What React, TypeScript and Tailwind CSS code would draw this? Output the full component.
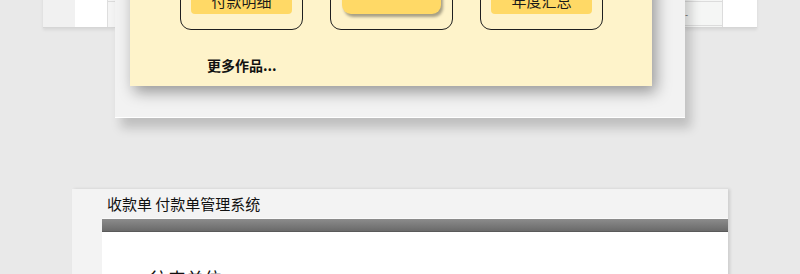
const cjk = { fontFamily: '"Noto Sans CJK SC", "Noto Sans", sans-serif' };

function SideSheet({ side }: { side: "left" | "right" }) {
	if (side === "left") {
		return (
			<div className="flex h-[88px] w-[72px] shrink-0 border-b border-[#d6d6d6] bg-white shadow-[0_2px_3px_rgba(0,0,0,0.08)]">
				<div className="w-[32px] bg-[#f1f1f1]" />
				<div className="w-[33px] border-r border-[#dedede] bg-white" />
				<div className="flex-1 bg-[#f4f4f4]">
					<div className="mt-[61px] border-t border-[#dcdcdc]" />
				</div>
			</div>
		);
	}
	return (
		<div className="flex h-[88px] w-[72px] shrink-0 border-b border-[#d6d6d6] bg-white shadow-[0_2px_3px_rgba(0,0,0,0.08)]">
			<div className="flex w-[38px] flex-col border-r border-[#dcdcdc] bg-[#f5f6f5]">
				<div className="mt-[61px] h-[25px] border-y border-[#dcdcdc] text-[9px] leading-[25px] text-[#555]">
					-
				</div>
			</div>
			<div className="flex-1 bg-white" />
		</div>
	);
}

function MenuBox({ label, raised }: { label?: string; raised?: boolean }) {
	return (
		<div className="flex h-[70px] w-[123px] flex-col justify-end rounded-[11px] border border-[#1f1f1f] px-[10px] pb-[15px]">
			{raised ? (
				<div className="mx-[1px] h-[48px] rounded-[9px] bg-[#ffd966] shadow-[2px_3px_3px_rgba(0,0,0,0.35)]" />
			) : (
				<div className="flex h-[28px] items-center justify-center rounded-[4px] bg-[#ffd966] pt-[1px] text-[15px] leading-[20px] text-[#1a1a1a]">
					{label}
				</div>
			)}
		</div>
	);
}

export default function App() {
	return (
		<div
			className="h-[274px] w-[800px] overflow-hidden bg-[#e9e9e9]"
			style={cjk}
		>
			<div className="-mt-[60px] flex items-start pl-[43px]">
				<SideSheet side="left" />
				<div className="relative z-10 h-[178px] w-[570px] shrink-0 border-b border-white bg-[#f2f2f2] pl-[15px] shadow-[6px_10px_10px_rgba(0,0,0,0.18)]">
					<div className="h-[146px] w-[522px] bg-[#fef3ca] pl-[50px] pt-[20px] shadow-[4px_6px_14px_rgba(0,0,0,0.38)]">
						<div className="flex gap-[27px]">
							<MenuBox label="付款明细" />
							<MenuBox raised />
							<MenuBox label="年度汇总" />
						</div>
						<div className="mt-[25px] pl-[27px] text-[14px] font-bold leading-[20px] text-[#111]">
							更多作品...
						</div>
					</div>
				</div>
				<SideSheet side="right" />
			</div>

			<div className="ml-[72px] mt-[71px] w-[656px] bg-[#f3f3f3] shadow-[2px_0_3px_rgba(0,0,0,0.12)]">
				<div className="h-[29px] pl-[35px] pt-[4px] text-[15px] leading-[22px] text-[#111]">
					收款单 付款单管理系统
				</div>
				<div className="ml-[30px] border-t border-[#fafafa]">
					<div className="h-[13px] border-b border-[#5a5a5a] bg-gradient-to-b from-[#8c8c8c] to-[#6a6a6a]" />
					<div className="h-[60px] bg-white pl-[48px] pt-[34px] text-[18px] leading-[24px] text-[#111]">
						往来单位
					</div>
				</div>
			</div>
		</div>
	);
}
